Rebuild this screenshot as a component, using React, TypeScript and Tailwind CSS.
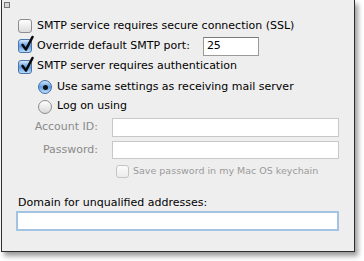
import React from "react";

const font = { fontFamily: '"DejaVu Sans", "Liberation Sans", sans-serif' };

const CheckBox = ({ checked = false, disabled = false }: { checked?: boolean; disabled?: boolean }) => {
    if (checked) {
        return (
            <span className="relative inline-block w-[14px] h-[14px] shrink-0 rounded-[3px] border border-[#4a74aa] bg-gradient-to-b from-[#d6e9fc] via-[#5d9ae0] to-[#b8dcfb]">
                <svg className="absolute left-[1px] top-[-5px]" width="15" height="17" viewBox="0 0 15 17">
                    <path d="M2.5 10 L6 14.5 L12.5 2" fill="none" stroke="#0a0a0a" strokeWidth="2.6" strokeLinecap="round" strokeLinejoin="round" />
                </svg>
            </span>
        );
    }
    return (
        <span
            className={
                disabled
                    ? "inline-block w-[13px] h-[13px] shrink-0 rounded-[3px] border border-[#c4c4c4] bg-gradient-to-b from-[#fbfbfb] to-[#ececec]"
                    : "inline-block w-[14px] h-[14px] shrink-0 rounded-[3px] border border-[#8c8c8c] bg-gradient-to-b from-[#ffffff] to-[#dcdcdc]"
            }
        />
    );
};

const Radio = ({ checked = false }: { checked?: boolean }) => {
    if (checked) {
        return (
            <span className="flex items-center justify-center w-[14px] h-[14px] shrink-0 rounded-full border border-[#3f6da6] bg-gradient-to-b from-[#cfe4fa] via-[#5f9ce0] to-[#bfe0fc]">
                <span className="w-[5px] h-[5px] rounded-full bg-[#111]" />
            </span>
        );
    }
    return <span className="inline-block w-[14px] h-[14px] shrink-0 rounded-full border border-[#8c8c8c] bg-gradient-to-b from-[#ffffff] to-[#d8d8d8]" />;
};

const App = () => {
    return (
        <div className="w-[364px] h-[261px] bg-white text-[11px] text-black whitespace-nowrap" style={font}>
            <div className="ml-px w-[354px] h-[252px] bg-[#eeeeee] border-l border-r border-b border-[#2e2e2e] shadow-[3px_4px_5px_rgba(0,0,0,0.4)] relative">
                <div className="absolute left-[2px] top-[2px] w-[6px] h-[6px] border border-[#777] bg-[#d6d6d6]" />
                <div className="flex flex-col pt-[16px] pl-[16px] pr-[15px]">
                    <div className="flex items-center h-[20px] gap-[5px]">
                        <CheckBox />
                        <span>SMTP service requires secure connection (SSL)</span>
                    </div>
                    <div className="flex items-center h-[20px] gap-[5px]">
                        <CheckBox checked />
                        <span>Override default SMTP port:</span>
                        <div className="ml-[8px] w-[56px] h-[19px] bg-white border border-[#9a9a9a] border-t-[#7a7a7a] flex items-center pl-[3px]">
                            25
                        </div>
                    </div>
                    <div className="flex items-center h-[21px] gap-[5px]">
                        <CheckBox checked />
                        <span>SMTP server requires authentication</span>
                    </div>
                    <div className="flex items-center h-[20px] gap-[5px] pl-[20px]">
                        <Radio checked />
                        <span>Use same settings as receiving mail server</span>
                    </div>
                    <div className="flex items-center h-[19px] gap-[5px] pl-[20px]">
                        <Radio />
                        <span>Log on using</span>
                    </div>
                    <div className="flex items-center h-[23px] text-[#8a8a8a]">
                        <span className="w-[80px] text-right">Account ID:</span>
                        <div className="ml-[14px] w-[227px] h-[19px] bg-white border border-[#c8c8c8]" />
                    </div>
                    <div className="flex items-center h-[22px] text-[#8a8a8a]">
                        <span className="w-[80px] text-right">Password:</span>
                        <div className="ml-[14px] w-[227px] h-[18px] bg-white border border-[#c8c8c8]" />
                    </div>
                    <div className="flex items-center h-[20px] gap-[4px] pl-[98px] text-[9.5px] text-[#9a9a9a]">
                        <CheckBox disabled />
                        <span>Save password in my Mac OS keychain</span>
                    </div>
                    <div className="flex items-center h-[16px] mt-[14px]">
                        <span>Domain for unqualified addresses:</span>
                    </div>
                    <div className="w-[323px] h-[20px] -ml-[2px] bg-white border-2 border-[#a3c3e3]" />
                </div>
            </div>
        </div>
    );
};

export default App;
